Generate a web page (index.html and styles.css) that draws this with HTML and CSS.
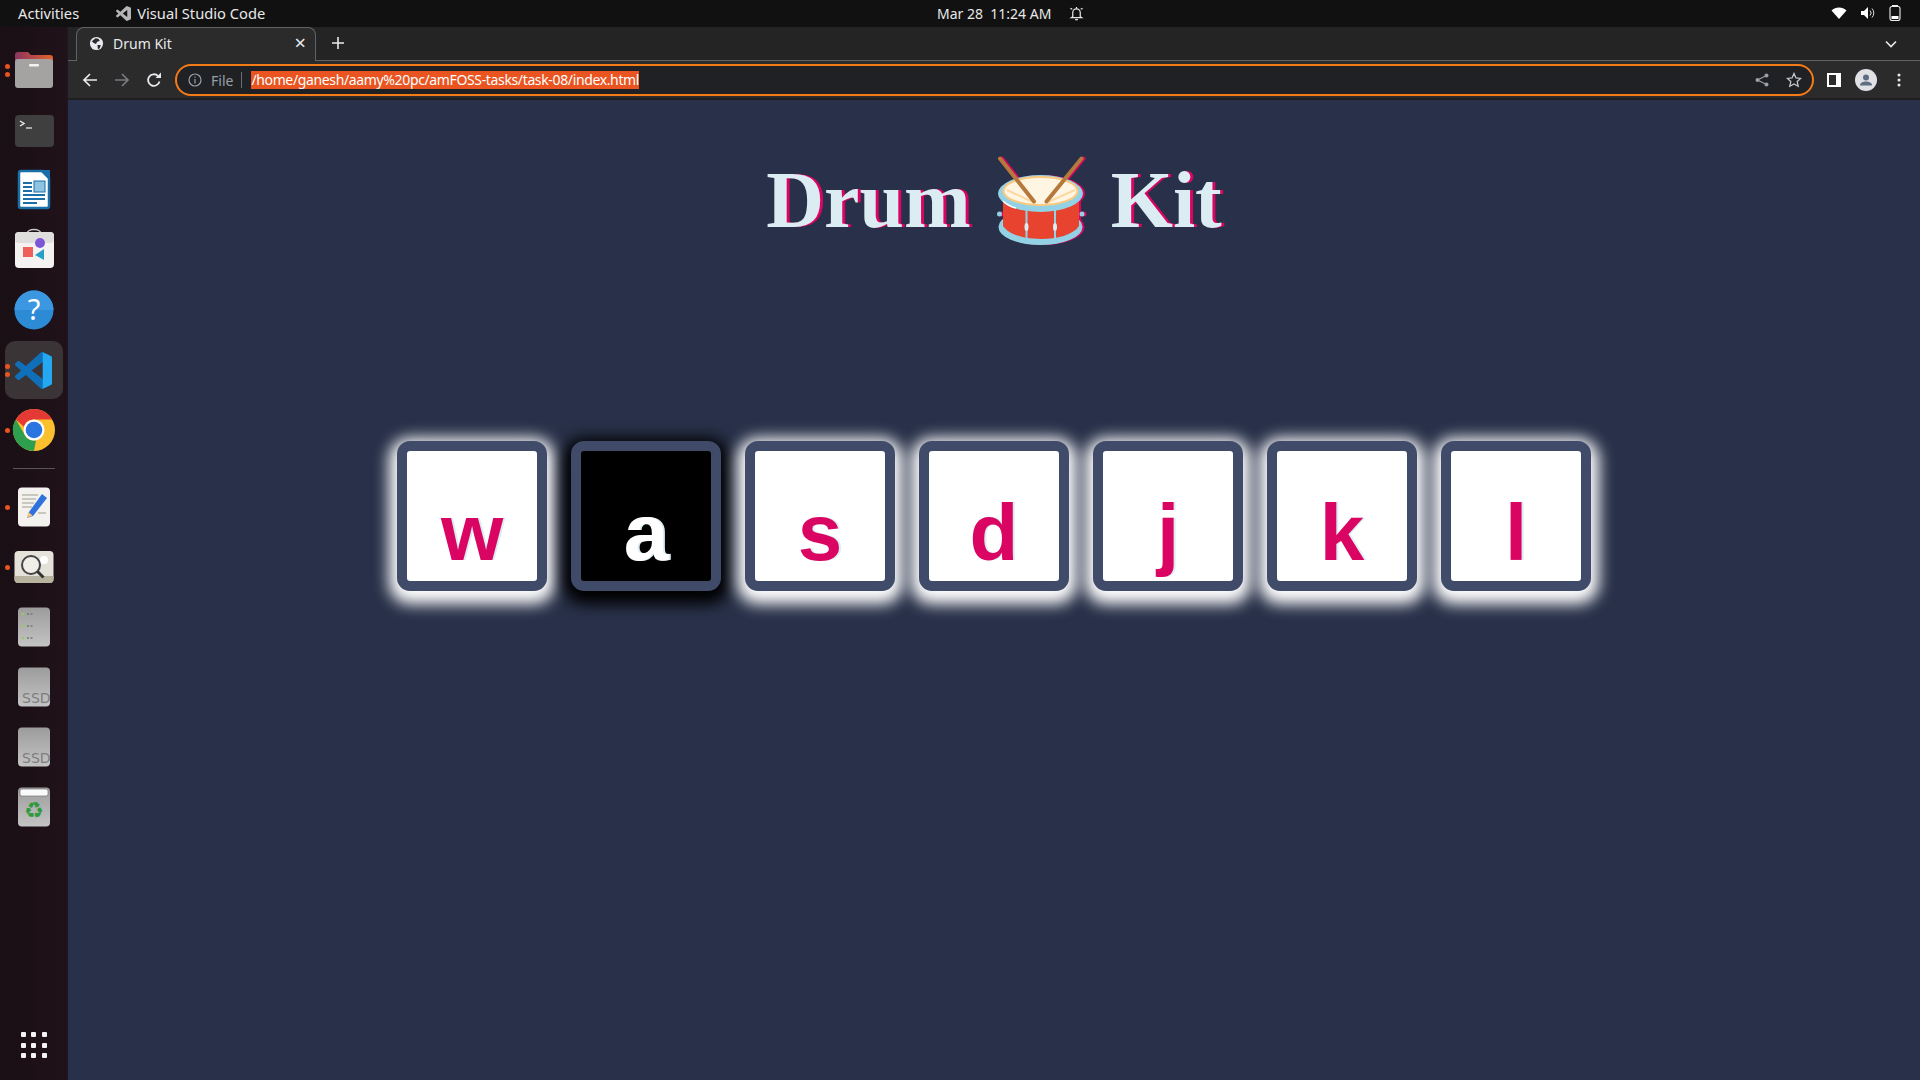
FILE: index.html
```html
<!DOCTYPE html>
<html>
<head>
  <meta charset="UTF-8">
  <title>Drum Kit</title>
  <link rel="stylesheet" href="styles.css">
</head>
<body>
  <div class="topbar">
    <div class="top-left">
      <span class="activities">Activities</span>
      <svg class="top-vs" viewBox="0 0 24 24" width="15" height="15"><path fill="#b5b5b5" d="M23.15 2.587L18.21.21a1.494 1.494 0 0 0-1.705.29l-9.46 8.63-4.12-3.128a.999.999 0 0 0-1.276.057L.327 7.261A1 1 0 0 0 .326 8.74L3.899 12 .326 15.26a1 1 0 0 0 .001 1.479L1.65 17.94a.999.999 0 0 0 1.276.057l4.12-3.128 9.46 8.63a1.492 1.492 0 0 0 1.704.29l4.942-2.377A1.5 1.5 0 0 0 24 20.06V3.939a1.5 1.5 0 0 0-.85-1.352zm-5.146 14.861L10.826 12l7.178-5.448v10.896z"/></svg>
      <span>Visual Studio Code</span>
    </div>
    <div class="top-center">
      <span>Mar 28&nbsp; 11:24 AM</span>
      <svg class="bell" viewBox="0 0 16 16" width="15" height="15" fill="none" stroke="#e8e8e8" stroke-width="1.3"><path d="M4 11.5V7a4 4 0 0 1 8 0v4.500l1.500 1h-11z"/><path d="M6.500 14.500h3M8 1v2M1.500 2.500l2 1M14.500 2.500l-2 1"/></svg>
    </div>
    <div class="top-right">
      <svg viewBox="0 0 16 16" width="16" height="16"><path fill="#fff" d="M0.500 5.500C4.500 1.500 11.500 1.500 15.500 5.500L8 14z"/></svg>
      <svg viewBox="0 0 16 16" width="16" height="16"><path fill="#fff" d="M1 6h3l4-4v12l-4-4H1z"/><path fill="none" stroke="#ddd" stroke-width="1" d="M10 5.500a3.500 3.500 0 0 1 0 5M12 3.500a6.500 6.500 0 0 1 0 9"/></svg>
      <svg viewBox="0 0 12 16" width="12" height="16"><rect x="1" y="1.500" width="10" height="14" rx="2" fill="none" stroke="#eee" stroke-width="1.100"/><rect x="3" y="0" width="6" height="1.500" fill="#eee"/><rect x="2.500" y="11" width="7" height="3" fill="#fff"/></svg>
    </div>
  </div>

  <div class="screen">
    <div class="dock">
      <div class="dock-item">
        <span class="run-dot dot-a"></span><span class="run-dot dot-b"></span>
        <svg viewBox="0 0 48 48" width="48" height="48">
          <defs>
            <linearGradient id="folderTop" x1="0" x2="1" y1="0" y2="0"><stop offset="0" stop-color="#8a3560"/><stop offset="1" stop-color="#e2622c"/></linearGradient>
            <linearGradient id="driveFill" x1="0" x2="0" y1="0" y2="1"><stop offset="0" stop-color="#9c9c9c"/><stop offset="1" stop-color="#c4c4c4"/></linearGradient>
          </defs>
          <path fill="url(#folderTop)" d="M5 9a3 3 0 0 1 3-3h10l3 3h19a3 3 0 0 1 3 3v10H5z"/>
          <rect x="5" y="13" width="38" height="29" rx="3" fill="#a5a3a2"/>
          <rect x="19" y="18" width="10" height="2.500" rx="1" fill="#f2f2f2"/>
        </svg>
      </div>
      <div class="dock-item">
        <svg viewBox="0 0 48 48" width="48" height="48">
          <rect x="5" y="9" width="39" height="32" rx="4" fill="#3f3f3f"/>
          <path fill="none" stroke="#eee" stroke-width="1.400" d="M10 15l4 2.500-4 2.500"/>
          <path stroke="#ccc" stroke-width="1.500" d="M16 22h6"/>
        </svg>
      </div>
      <div class="dock-item">
        <svg viewBox="0 0 48 48" width="48" height="48">
          <path fill="#fff" stroke="#1a6fa8" stroke-width="2.500" d="M9 7a2 2 0 0 1 2-2h21l7 7v28a2 2 0 0 1-2 2H11a2 2 0 0 1-2-2z"/>
          <path fill="#1a6fa8" d="M32 4h8v8z"/>
          <path stroke="#1a6fa8" stroke-width="2" d="M13 17h9M13 21h9M13 25h9M13 29h22M13 33h22M13 37h14"/>
          <rect x="24" y="15" width="11" height="11" fill="#8fc3e2" stroke="#1a6fa8"/>
        </svg>
      </div>
      <div class="dock-item">
        <svg viewBox="0 0 48 48" width="48" height="48">
          <path fill="none" stroke="#c8c8c8" stroke-width="1.500" d="M17 8c0-6 14-6 14 0"/>
          <rect x="5" y="6" width="39" height="36" rx="4" fill="#f4f3f2"/>
          <rect x="5" y="6" width="39" height="11" rx="4" fill="#dfdedd"/>
          <rect x="13" y="21" width="10" height="10" fill="#f0605a"/>
          <circle cx="30" cy="17" r="5" fill="#7d56d6"/>
          <path fill="#26a0c4" d="M25 29l9-6v11z"/>
        </svg>
      </div>
      <div class="dock-item">
        <svg viewBox="0 0 48 48" width="48" height="48">
          <circle cx="24" cy="24" r="19.500" fill="#2d8bd6"/>
          <path fill="#3a97e0" d="M4.500 24a19.500 19.500 0 0 1 39 0z"/>
          <text class="help-mark" x="24" y="34" text-anchor="middle">?</text>
        </svg>
      </div>
      <div class="dock-item dock-active">
        <span class="run-dot dot-a"></span><span class="run-dot dot-b"></span>
        <svg viewBox="0 0 24 24" width="37" height="37">
          <path fill="#0f6fb8" d="M23.15 2.587L18.21.21a1.494 1.494 0 0 0-1.705.29l-9.46 8.63-4.12-3.128a.999.999 0 0 0-1.276.057L.327 7.261A1 1 0 0 0 .326 8.74L3.899 12 .326 15.26a1 1 0 0 0 .001 1.479L1.65 17.940a.999.999 0 0 0 1.276.057l4.120-3.128 9.460 8.630a1.492 1.492 0 0 0 1.704.29l4.942-2.377A1.500 1.500 0 0 0 24 20.060V3.939a1.500 1.500 0 0 0-.85-1.352zm-5.146 14.861L10.826 12l7.178-5.448v10.896z"/>
          <path fill="#25a8f2" d="M18 0.100l5.150 2.487A1.500 1.500 0 0 1 24 3.939V20.060a1.500 1.500 0 0 1-.85 1.352L18 23.900z"/>
        </svg>
      </div>
      <div class="dock-item">
        <span class="run-dot dot-c"></span>
        <svg viewBox="0 0 48 48" width="48" height="48">
          <circle cx="24" cy="24" r="21" fill="#fbc02d"/>
          <path fill="#e53935" d="M24 3a21 21 0 0 1 18.200 10.500H24a10.500 10.500 0 0 0-10 7.300L5.800 13.500A21 21 0 0 1 24 3z"/>
          <path fill="#2e9e4f" d="M5.800 13.500L16 31l8 14a21 21 0 0 1-18.200-31.500z"/>
          <path fill="#2e9e4f" d="M16 31a10.500 10.500 0 0 0 10 3.200L24 45a21 21 0 0 1-8-14z"/>
          <circle cx="24" cy="24" r="10.500" fill="#fff"/>
          <circle cx="24" cy="24" r="8.300" fill="#2a75e0"/>
        </svg>
      </div>
      <div class="dock-sep"></div>
      <div class="dock-item">
        <span class="run-dot dot-c"></span>
        <svg viewBox="0 0 48 48" width="48" height="48">
          <rect x="8" y="4.500" width="32" height="39" rx="4" fill="#f3f2ef"/>
          <path stroke="#bdb9ae" stroke-width="1.500" d="M12 12h16M12 16h14M12 20h12M12 24h10M28 30h8"/>
          <path fill="#2f72dc" d="M32 11l5 4-14 18-6 2 2-6z"/>
          <path fill="#f4c27c" d="M17 35l1.500-6 4 3.500z"/>
        </svg>
      </div>
      <div class="dock-item">
        <span class="run-dot dot-c"></span>
        <svg viewBox="0 0 48 48" width="48" height="48">
          <rect x="4.500" y="8" width="39" height="32" rx="4" fill="#e5e3d9"/>
          <path fill="#b6b39f" d="M4.500 33h39v3a4 4 0 0 1-4 4h-31a4 4 0 0 1-4-4z"/>
          <circle cx="34" cy="17" r="4" fill="#fff"/>
          <circle cx="21" cy="22" r="9" fill="#f5f5f0" fill-opacity=".6" stroke="#444" stroke-width="2"/>
          <path stroke="#333" stroke-width="3" d="M27.500 28.500l6 6"/>
        </svg>
      </div>
      <div class="dock-item">
        <svg viewBox="0 0 48 48" width="48" height="48">
          <rect x="8" y="4.500" width="32" height="39" rx="4" fill="url(#driveFill)"/>
          <circle cx="13" cy="11" r="1.500" fill="#9fc46e"/><circle cx="13" cy="23" r="1.500" fill="#9fc46e"/><circle cx="13" cy="35" r="1.500" fill="#9fc46e"/>
          <path stroke="#777" stroke-width="1.500" stroke-dasharray="2 1.500" d="M17 11h6M17 23h6M17 35h6"/>
        </svg>
      </div>
      <div class="dock-item">
        <svg viewBox="0 0 48 48" width="48" height="48">
          <rect x="8" y="4.500" width="32" height="39" rx="4" fill="url(#driveFill)"/>
          <text class="ssd" x="12" y="40">SSD</text>
        </svg>
      </div>
      <div class="dock-item">
        <svg viewBox="0 0 48 48" width="48" height="48">
          <rect x="8" y="4.500" width="32" height="39" rx="4" fill="url(#driveFill)"/>
          <text class="ssd" x="12" y="40">SSD</text>
        </svg>
      </div>
      <div class="dock-item">
        <svg viewBox="0 0 48 48" width="48" height="48">
          <rect x="8" y="4.500" width="32" height="39" rx="4" fill="url(#driveFill)"/>
          <rect x="10" y="6" width="28" height="7" rx="2" fill="#fafafa" stroke="#777" stroke-width=".7"/>
          <text class="recycle" x="24" y="35" text-anchor="middle">♻</text>
        </svg>
      </div>
      <div class="app-grid">
        <i></i><i></i><i></i><i></i><i></i><i></i><i></i><i></i><i></i>
      </div>
    </div>

    <div class="browser">
      <div class="tabstrip">
        <div class="tab">
          <svg viewBox="0 0 16 16" width="15" height="15"><circle cx="8" cy="8" r="7" fill="#e8eaed"/><path fill="#2b2b2b" d="M7 2.500l3 .5 1.500 2-3 1.500-1 2-2.500-1-2-2zM9 9.500l3.500 0-1 3.500-2 1z"/></svg>
          <span class="tab-title">Drum Kit</span>
          <span class="tab-close">×</span>
        </div>
        <svg class="tab-new" viewBox="0 0 12 12" width="12" height="12"><path stroke="#e8eaed" stroke-width="1.600" d="M6 0v12M0 6h12"/></svg>
        <svg class="tab-list" viewBox="0 0 12 8" width="12" height="8" fill="none"><path stroke="#e8eaed" stroke-width="1.600" d="M1 1.500l5 5 5-5"/></svg>
      </div>

      <div class="toolbar">
        <svg class="nav" viewBox="0 0 16 16" width="16" height="16" fill="none" stroke="#e8eaed" stroke-width="1.700"><path d="M15 8H2M8 2L2 8l6 6"/></svg>
        <svg class="nav" viewBox="0 0 16 16" width="16" height="16" fill="none" stroke="#777a7e" stroke-width="1.700"><path d="M1 8h13M8 2l6 6-6 6"/></svg>
        <svg class="nav" viewBox="0 0 16 16" width="16" height="16" fill="none" stroke="#e8eaed" stroke-width="1.800"><path d="M13.500 9.500A5.800 5.800 0 1 1 12 4"/><path fill="#e8eaed" stroke="none" d="M9.500 6H15V.5z"/></svg>
        <div class="omnibox">
          <svg viewBox="0 0 14 14" width="14" height="14" fill="none" stroke="#9aa0a6" stroke-width="1.200"><circle cx="7" cy="7" r="6"/><path d="M7 6v4.500M7 3.500v1.300"/></svg>
          <span class="scheme">File</span>
          <span class="url-sep"></span>
          <span class="url">/home/ganesh/aamy%20pc/amFOSS-tasks/task-08/index.html</span>
          <svg class="omni-share" viewBox="0 0 14 14" width="14" height="14" fill="#9aa0a6"><circle cx="2.500" cy="7" r="2"/><circle cx="11.500" cy="2.500" r="2"/><circle cx="11.500" cy="11.500" r="2"/><path stroke="#9aa0a6" stroke-width="1.200" d="M2.500 7l9-4.500M2.500 7l9 4.500"/></svg>
          <svg class="omni-star" viewBox="0 0 16 16" width="16" height="16" fill="none" stroke="#c4c7c9" stroke-width="1.300"><path d="M8 1.500l2 4.400 4.700.5-3.500 3.200 1 4.700L8 11.900l-4.200 2.400 1-4.700L1.300 6.400 6 5.900z"/></svg>
        </div>
        <div class="panel-icon"><span></span></div>
        <svg class="avatar" viewBox="0 0 22 22" width="22" height="22"><circle cx="11" cy="11" r="11" fill="#dfe1e5"/><circle cx="11" cy="8.500" r="3" fill="#5f6d82"/><path fill="#5f6d82" d="M5 16.500c0-3 3-4 6-4s6 1 6 4z"/></svg>
        <svg class="menu-icon" viewBox="0 0 4 14" width="4" height="14" fill="#e8eaed"><circle cx="2" cy="2" r="1.500"/><circle cx="2" cy="7" r="1.500"/><circle cx="2" cy="12" r="1.500"/></svg>
      </div>

      <div class="page">
        <h1 class="title">Drum
          <svg class="drum" viewBox="0 0 100 100" width="100" height="100">
            <ellipse cx="49.500" cy="77" rx="42" ry="18" fill="#93d2e5"/>
            <path fill="#e8432f" d="M12 48h76v28c-6 9-22 13-38 13s-32-4-38-13z"/>
            <path stroke="#93d2e5" stroke-width="2" d="M35.500 60v30M64 60v30"/>
            <ellipse cx="35.500" cy="77" rx="2" ry="4" fill="#dbedf3"/>
            <ellipse cx="64" cy="77" rx="2" ry="4" fill="#dbedf3"/>
            <circle cx="8.500" cy="64" r="2.500" fill="#93d2e5"/><circle cx="91" cy="64" r="2.500" fill="#93d2e5"/>
            <ellipse cx="49.500" cy="43.500" rx="42.500" ry="18.500" fill="#93d2e5"/>
            <ellipse cx="49.500" cy="41" rx="37" ry="14" fill="#fff5e3" stroke="#fcc97f" stroke-width="2"/>
            <path fill="none" stroke="#fff" stroke-width="1.600" d="M12 51c4 4 8 6 13 7"/>
            <path stroke="#fcd9a3" stroke-width="2" d="M16 40l26 12M84 40l-27 12"/>
            <path stroke="#b5793b" stroke-width="4" stroke-linecap="round" d="M9 8.500l34 43M90.500 8.500l-35 43"/>
          </svg>
          Kit</h1>
        <div class="keys">
          <div class="key">w</div>
          <div class="key key-on">a</div>
          <div class="key">s</div>
          <div class="key">d</div>
          <div class="key">j</div>
          <div class="key">k</div>
          <div class="key">l</div>
        </div>
      </div>
    </div>
  </div>
</body>
</html>
```

FILE: styles.css
```css
* {
  box-sizing: border-box;
}

html, body {
  margin: 0;
  height: 100%;
  overflow: hidden;
}

body {
  display: flex;
  flex-direction: column;
  width: 1920px;
  height: 1080px;
  font-family: "Noto Sans", sans-serif;
  background-color: #283149;
}

/* ubuntu top bar */
.topbar {
  display: grid;
  grid-template-columns: 937px auto 1fr;
  align-items: center;
  height: 27px;
  flex-shrink: 0;
  padding-bottom: 1px;
  background-color: #111;
  color: #e8e8e8;
  font-size: 14px;
}

.top-left {
  display: flex;
  align-items: center;
  padding-left: 18px;
  font-size: 14.700px;
}

.activities {
  margin-right: 37px;
}

.top-vs {
  margin-right: 6px;
}

.top-center {
  display: flex;
  align-items: center;
  gap: 18px;
}

.top-right {
  display: flex;
  align-items: center;
  justify-content: flex-end;
  gap: 13px;
  padding-right: 19px;
}

.screen {
  display: flex;
  flex: 1;
  min-height: 0;
}

/* dock */
.dock {
  display: flex;
  flex-direction: column;
  align-items: center;
  width: 68px;
  flex-shrink: 0;
  padding-top: 13px;
  padding-bottom: 5px;
  background: linear-gradient(90deg, #190f14, #21121a);
  border-right: 1px solid #1a1a22;
}

.dock-item {
  position: relative;
  display: flex;
  align-items: center;
  justify-content: center;
  width: 58px;
  height: 60px;
}

.dock-active::before {
  content: "";
  position: absolute;
  top: 1px;
  left: 0;
  width: 58px;
  height: 58px;
  border-radius: 10px;
  background-color: #3a3436;
}

.dock-item svg {
  position: relative;
}

.run-dot {
  position: absolute;
  left: 0;
  width: 5px;
  height: 5px;
  border-radius: 50%;
  background-color: #e95420;
  z-index: 1;
}

.dot-a {
  top: 24px;
}

.dot-b {
  top: 32px;
}

.dot-c {
  top: 28px;
}

.dock-sep {
  width: 42px;
  height: 17px;
  padding-top: 8px;
}

.dock-sep::before {
  content: "";
  display: block;
  height: 1px;
  background-color: #5c5558;
}

.app-grid {
  display: grid;
  grid-template-columns: repeat(3, 5px);
  gap: 5.500px;
  margin-top: auto;
  height: 60px;
  align-content: center;
}

.app-grid i {
  width: 5px;
  height: 5px;
  background-color: #f4f4f4;
  border-radius: 1px;
}

.help-mark {
  font-family: "Noto Sans", sans-serif;
  font-size: 29px;
  fill: #fff;
}

.ssd {
  font-family: "DejaVu Sans", sans-serif;
  font-size: 14px;
  fill: #7e7e7e;
}

.recycle {
  font-family: "DejaVu Sans", sans-serif;
  font-size: 22px;
  fill: #2f9a3c;
}

/* browser */
.browser {
  display: flex;
  flex-direction: column;
  flex: 1;
  min-width: 0;
}

.tabstrip {
  display: flex;
  align-items: flex-end;
  height: 34px;
  flex-shrink: 0;
  padding-left: 8px;
  background-color: #242424;
  border-bottom: 1px solid #5f6368;
}

.tab {
  display: flex;
  align-items: center;
  width: 240px;
  height: 34px;
  margin-bottom: -1px;
  padding: 0 9px 3px 12px;
  background-color: #2b2b2b;
  border: 1px solid #5f6368;
  border-bottom: none;
  border-radius: 8px 8px 0 0;
  color: #e8eaed;
  font-size: 14px;
}

.tab-title {
  flex: 1;
  margin-left: 9px;
}

.tab-close {
  font-size: 20px;
  line-height: 1;
}

.tab-new {
  margin: 0 0 11px 16px;
}

.tab-list {
  margin: 0 23px 12px auto;
}

.toolbar {
  display: flex;
  align-items: center;
  height: 39px;
  flex-shrink: 0;
  padding: 1px 0 0 14px;
  background-color: #2b2b2b;
  border-bottom: 2px solid #1f1f1f;
}

.nav {
  margin-right: 16px;
}

.omnibox {
  display: flex;
  align-items: center;
  width: 1639px;
  height: 32px;
  margin-left: -3px;
  padding: 0 10px 0 11px;
  background-color: #1f2125;
  border: 2px solid #f47b16;
  border-radius: 16px;
  font-size: 14px;
}

.scheme {
  margin-left: 9px;
  color: #9aa0a6;
}

.url-sep {
  width: 1px;
  height: 16px;
  margin: 0 9px 0 8px;
  background-color: #6a6d71;
}

.url {
  background-color: #e95420;
  color: #fff;
  line-height: 18px;
  letter-spacing: -0.36px;
}

.omni-share {
  margin-left: auto;
}

.omni-star {
  margin-left: 17px;
}

.panel-icon {
  width: 14px;
  height: 14px;
  margin-left: 13px;
  padding: 2px 2px 2px 5px;
  background-color: #fff;
}

.panel-icon span {
  display: block;
  width: 7px;
  height: 10px;
  background-color: #2b2b2b;
  margin-left: -3px;
}

.avatar {
  margin-left: 14px;
}

.menu-icon {
  margin-left: 20px;
}

/* the drum kit page */
.page {
  flex: 1;
  background-color: #283149;
}

.title {
  height: 100px;
  margin: 50px 0 0;
  font-family: "Liberation Serif", serif;
  font-size: 80px;
  font-weight: bold;
  line-height: 100px;
  text-align: center;
  color: #dbedf3;
  text-shadow: 3px 0 0 #da0463;
}

.drum {
  display: inline-block;
  vertical-align: -23px;
  overflow: visible;
  filter: drop-shadow(2px 0 0 #da0463);
}

.keys {
  display: flex;
  justify-content: center;
  gap: 24px;
  margin-top: 191px;
}

.key {
  width: 150px;
  height: 150px;
  padding-top: 36px;
  background-color: #fff;
  border: 10px solid #404b69;
  border-radius: 13px;
  box-shadow: 0 5px 15px 8px #fff;
  font-family: "Liberation Sans", sans-serif;
  font-size: 80px;
  font-weight: bold;
  text-align: center;
  color: #da0463;
  text-shadow: 2px 0 0 #dbedf3;
}

.key-on {
  background-color: #000;
  color: #fff;
  box-shadow: 0 5px 15px 8px #000;
}
```
